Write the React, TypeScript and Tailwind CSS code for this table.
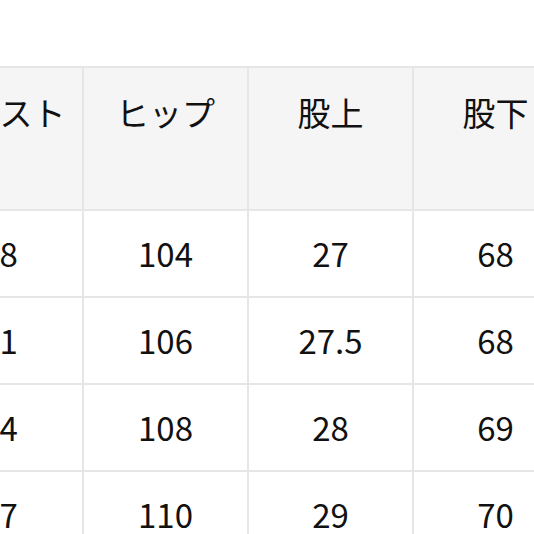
import React from "react";

const headers = ["ウエスト", "ヒップ", "股上", "股下"];
const rows = [
  ["78", "104", "27", "68"],
  ["81", "106", "27.5", "68"],
  ["84", "108", "28", "69"],
  ["87", "110", "29", "70"],
];

export default function App() {
  return (
    <div
      className="w-[534px] h-[534px] overflow-hidden bg-white text-[#111]"
      style={{ fontFamily: '"Noto Sans CJK JP", "Noto Sans", sans-serif' }}
    >
      <div className="pt-[66px] ml-[-83px] w-[700px]">
        <div className="flex border-t-2 border-[#e6e6e6] bg-[#f5f5f5]">
          {headers.map((h, i) => (
            <div
              key={h}
              className={`w-[165px] h-[143px] shrink-0 pt-[20px] text-center text-[33px] leading-[48px] border-b-2 border-[#e6e6e6] ${
                i > 0 ? "border-l-2" : ""
              }`}
            >
              {h}
            </div>
          ))}
        </div>
        {rows.map((r, ri) => (
          <div key={ri} className="flex">
            {r.map((v, i) => (
              <div
                key={i}
                className={`w-[165px] h-[87px] shrink-0 flex items-center justify-center text-[33px] border-b-2 border-[#e6e6e6] ${
                  i > 0 ? "border-l-2" : ""
                }`}
              >
                {v}
              </div>
            ))}
          </div>
        ))}
      </div>
    </div>
  );
}
